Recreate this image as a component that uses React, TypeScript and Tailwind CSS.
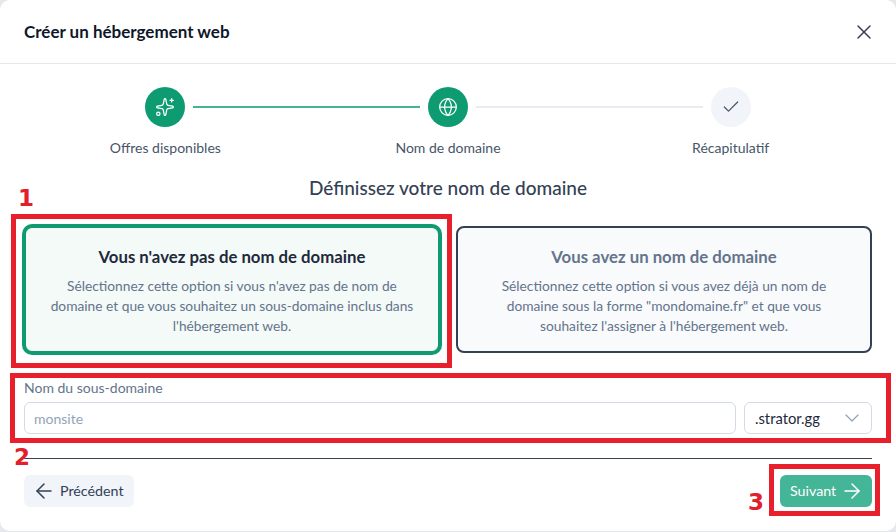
import { ArrowLeft, ArrowRight, Check, ChevronDown, Globe, Sparkles, X } from 'lucide-react';

const stepLabels = ['Offres disponibles', 'Nom de domaine', 'Récapitulatif'];

export default function App() {
  return (
    <div className="relative h-[532px] w-[896px] overflow-hidden bg-[#e6e8ec] font-['Lato',sans-serif] text-[#334155]">
      <div className="flex h-[531px] flex-col rounded-[10px] bg-white">
        {/* Header */}
        <div className="flex h-[64px] shrink-0 items-center justify-between border-b border-[#e5e7eb] pr-5 pl-6">
          <h1 className="text-[17px] font-bold text-[#0f172a]">Créer un hébergement web</h1>
          <X className="h-6 w-6 text-[#374151]" strokeWidth={1.5} />
        </div>

        {/* Stepper */}
        <div className="flex items-center px-[145px] pt-[23px]">
          <span className="flex h-10 w-10 shrink-0 items-center justify-center rounded-full bg-[#0f9b72] text-white">
            <Sparkles className="h-5 w-5" strokeWidth={1.5} />
          </span>
          <span className="mx-2 h-0.5 flex-1 bg-[#45b494]" />
          <span className="flex h-10 w-10 shrink-0 items-center justify-center rounded-full bg-[#0f9b72] text-white">
            <Globe className="h-5 w-5" strokeWidth={1.5} />
          </span>
          <span className="mx-2 h-0.5 flex-1 bg-[#e9ebf0]" />
          <span className="flex h-10 w-10 shrink-0 items-center justify-center rounded-full bg-[#f1f4f9] text-[#475569]">
            <Check className="h-5 w-5" strokeWidth={1.5} />
          </span>
        </div>
        <div className="mt-[11px] grid grid-cols-3 px-6">
          {stepLabels.map((label) => (
            <span key={label} className="text-center text-[14px] leading-5 text-[#475569]">
              {label}
            </span>
          ))}
        </div>

        <h2 className="mt-[18px] text-center text-[19px] leading-6 font-medium text-[#334155]">
          Définissez votre nom de domaine
        </h2>

        {/* Options */}
        <div className="mt-[26px] grid grid-cols-2 gap-4 px-6">
          <div className="flex h-[127px] flex-col items-center rounded-lg border-2 border-[#0f9b72] bg-[#f3faf8] pt-[17px] text-center ring-2 ring-[#0f9b72]">
            <h3 className="text-[16.75px] leading-6 font-bold text-[#1e293b]">Vous n'avez pas de nom de domaine</h3>
            <p className="mt-[7px] text-[13.75px] leading-5 text-[#64748b]">
              Sélectionnez cette option si vous n'avez pas de nom de
              <br />
              domaine et que vous souhaitez un sous-domaine inclus dans
              <br />
              l'hébergement web.
            </p>
          </div>
          <div className="flex h-[127px] flex-col items-center rounded-lg border-2 border-[#334155] bg-[#f8fafc] pt-[17px] text-center">
            <h3 className="text-[16.75px] leading-6 font-bold text-[#64748b]">Vous avez un nom de domaine</h3>
            <p className="mt-[7px] text-[13.75px] leading-5 text-[#64748b]">
              Sélectionnez cette option si vous avez déjà un nom de
              <br />
              domaine sous la forme "mondomaine.fr" et que vous
              <br />
              souhaitez l'assigner à l'hébergement web.
            </p>
          </div>
        </div>

        {/* Sub-domain */}
        <div className="mt-[26px] px-6">
          <label className="block text-[14px] leading-[18px] text-[#64748b]">Nom du sous-domaine</label>
          <div className="mt-[5px] flex gap-2">
            <div className="flex h-8 flex-1 items-center rounded-md border border-[#d5dbe5] bg-white px-[9px] text-[14px] text-[#94a3b8]">
              monsite
            </div>
            <div className="flex h-8 w-[128px] items-center justify-between rounded-md border border-[#d5dbe5] bg-white pr-[7px] pl-[10px] text-[14.75px] text-[#1e293b]">
              .strator.gg
              <ChevronDown className="h-6 w-6 text-[#94a3b8]" strokeWidth={1.25} />
            </div>
          </div>
        </div>

        {/* Footer */}
        <div className="mx-6 mt-6 border-t border-[#374151]" />
        <div className="mt-4 flex items-center justify-between px-6">
          <button className="flex h-8 w-[110px] items-center gap-1 rounded-md bg-[#f1f4f9] pl-2 text-[14.25px] text-[#334155]">
            <ArrowLeft className="h-6 w-6" strokeWidth={1.5} />
            Précédent
          </button>
          <button className="flex h-8 w-[92px] items-center justify-between rounded-md bg-[#44b596] pr-2 pl-[10px] text-[14.25px] text-white">
            Suivant
            <ArrowRight className="h-6 w-6" strokeWidth={1.5} />
          </button>
        </div>
      </div>

      {/* Red annotations over the screenshot */}
      <span className="absolute top-[184px] left-[18px] font-['DejaVu_Sans',sans-serif] text-[23px] leading-7 font-bold text-[#e1202c]">1</span>
      <span className="absolute top-[443px] left-[14px] font-['DejaVu_Sans',sans-serif] text-[23px] leading-7 font-bold text-[#e1202c]">2</span>
      <span className="absolute top-[488px] left-[748px] font-['DejaVu_Sans',sans-serif] text-[23px] leading-7 font-bold text-[#e1202c]">3</span>
      <div className="absolute top-[214px] left-[11px] h-[154px] w-[441px] border-[5px] border-[#e8202c]" />
      <div className="absolute top-[373px] left-[10px] h-[70px] w-[881px] border-[5px] border-[#e8202c]" />
      <div className="absolute top-[464px] left-[769px] h-[52px] w-[111px] border-[5px] border-[#e8202c]" />
    </div>
  );
}
